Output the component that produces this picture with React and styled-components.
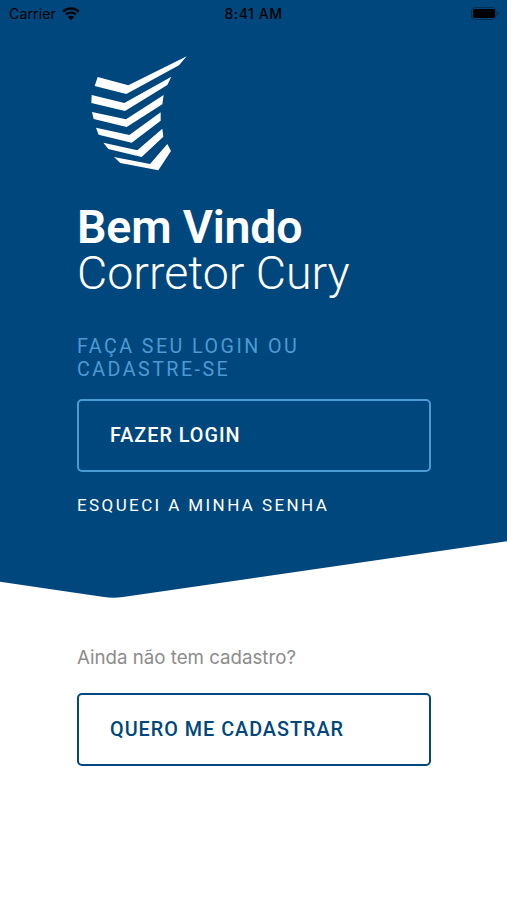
import React from "react";
import styled, { createGlobalStyle } from "styled-components";

const App = () => {
  return (
    <>
      <GlobalStyle />
      <Screen>
        <Hero>
          <StatusBar>
            <Carrier>
              Carrier
              <WifiIcon />
            </Carrier>
            <Time>8:41 AM</Time>
            <BatteryIcon />
          </StatusBar>
          <Logo />
          <Title>
            <TitleLine $weight={600} $spacing="-0.2px">
              Bem Vindo
            </TitleLine>
            <TitleLine $weight={300} $spacing="0px">
              Corretor Cury
            </TitleLine>
          </Title>
          <Subtitle>
            Faça seu login ou
            <br />
            cadastre-se
          </Subtitle>
          <Button $color="#ffffff" $border="#4c9ad4">
            Fazer login
          </Button>
          <ForgotLink href="#">Esqueci a minha senha</ForgotLink>
        </Hero>
        <SignUp>
          <Question>Ainda não tem cadastro?</Question>
          <Button $color="#00477d" $border="#00477d">
            Quero me cadastrar
          </Button>
        </SignUp>
      </Screen>
    </>
  );
};

const Logo = () => (
  <LogoSvg viewBox="0 0 360 405" fill="#fff">
    <path d="M53 96L145 121L320 34L297 61L139 147L44 123Z" />
    <path d="M35 150L133 174L274 95L262 120L135 198L34 174Z" />
    <path d="M36 201L138 223L251 150L247 178L140 246L41 222Z" />
    <path d="M48 248L148 270L242 202L242 227L155 293L56 269Z" />
    <path d="M70 293L172 316L247 251L250 275L185 336L85 312Z" />
    <path d="M102 336L210 357L262 297L273 318L235 376L121 354Z" />
  </LogoSvg>
);

const WifiIcon = () => (
  <svg width="18" height="14" viewBox="0 0 18 14">
    <path
      d="M1.2 4.6A11 11 0 0 1 16.8 4.6M4 7.6A7 7 0 0 1 14 7.6"
      fill="none"
      stroke="#000"
      strokeWidth="2.2"
    />
    <path d="M9 13.2L5.9 10.1A4.4 4.4 0 0 1 12.1 10.1Z" />
  </svg>
);

const BatteryIcon = () => (
  <BatterySvg width="28" height="13" viewBox="0 0 28 13">
    <rect
      x="0.5"
      y="0.5"
      width="24.5"
      height="12"
      rx="3.5"
      fill="none"
      stroke="#000"
      strokeOpacity="0.35"
    />
    <rect x="2" y="2" width="22" height="9" rx="1.8" />
    <path d="M26.5 4.5Q28 5.2 28 6.5T26.5 8.5Z" fillOpacity="0.4" />
  </BatterySvg>
);

const GlobalStyle = createGlobalStyle`
  * {
    box-sizing: border-box;
  }

  body {
    margin: 0;
    background: #fff;
    font-family: Roboto, "Liberation Sans", sans-serif;
  }
`;

const Screen = styled.div`
  width: 507px;
  height: 900px;
  overflow: hidden;
  background: #fff;
`;

const Hero = styled.header`
  display: flex;
  flex-direction: column;
  height: 600px;
  padding: 0 76px 0 77px;
  background: #00477d;
  clip-path: path(
    "M0 0H507V541.3L123 597Q113.5 598.4 104 597L0 581.7Z"
  );
`;

const StatusBar = styled.div`
  display: grid;
  grid-template-columns: 1fr auto 1fr;
  align-items: center;
  height: 27px;
  margin: 0 -67px 0 -68px;
  color: #000;
  font-family: Inter, "Liberation Sans", sans-serif;
  font-size: 14px;
`;

const Carrier = styled.div`
  display: flex;
  align-items: center;
  gap: 6px;
  letter-spacing: 0.15px;
`;

const Time = styled.div`
  font-weight: 500;
  letter-spacing: 0.55px;
`;

const BatterySvg = styled.svg`
  justify-self: end;
  margin-right: -1px;
`;

const LogoSvg = styled.svg`
  width: 120px;
  height: 135px;
  margin: 18px 0 0 3px;
`;

const Title = styled.h1`
  margin: 24px 0 0;
  color: #fff;
  font-size: 46.5px;
  line-height: 46px;
`;

const TitleLine = styled.span`
  display: block;
  font-weight: ${({ $weight }) => $weight};
  letter-spacing: ${({ $spacing }) => $spacing};
`;

const Subtitle = styled.p`
  margin: 39px 0 0;
  color: #4c9ad4;
  font-size: 19.7px;
  line-height: 23px;
  letter-spacing: 2.45px;
  text-transform: uppercase;
`;

const Button = styled.button`
  height: 73px;
  width: 354px;
  margin-top: 18px;
  padding: 1px 31px 0;
  border: 2px solid ${({ $border }) => $border};
  border-radius: 5px;
  background: transparent;
  color: ${({ $color }) => $color};
  font-family: inherit;
  font-size: 19.8px;
  font-weight: 500;
  line-height: 24px;
  letter-spacing: 1px;
  text-align: left;
  text-transform: uppercase;
`;

const ForgotLink = styled.a`
  margin-top: 22px;
  color: #fff;
  font-size: 17px;
  line-height: 22px;
  letter-spacing: 2.4px;
  text-decoration: none;
  text-transform: uppercase;
`;

const SignUp = styled.section`
  padding: 46px 76px 0 77px;
`;

const Question = styled.p`
  margin: 0;
  padding-bottom: 5px;
  color: #8c8c8c;
  font-family: Inter, "Liberation Sans", sans-serif;
  font-size: 18.7px;
  line-height: 24px;
`;

export default App;
